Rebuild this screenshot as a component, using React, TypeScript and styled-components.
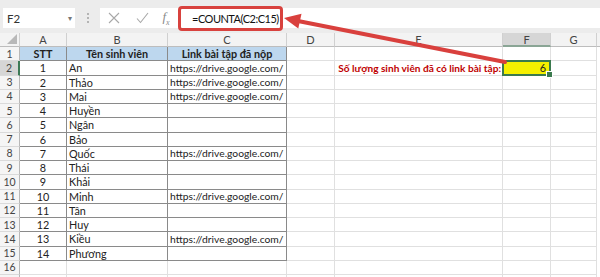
import React from "react";
import styled, { createGlobalStyle } from "styled-components";

const GlobalStyle = createGlobalStyle`
  html, body {
    margin: 0;
    padding: 0;
    width: 600px;
    height: 277px;
    overflow: hidden;
    background: #ffffff;
    font-family: "Lato", "Liberation Sans", sans-serif;
  }
`;

type Student = { stt: string; name: string; link: boolean };

const students: Student[] = [
  { stt: "1", name: "An", link: true },
  { stt: "2", name: "Thảo", link: true },
  { stt: "3", name: "Mai", link: true },
  { stt: "4", name: "Huyền", link: false },
  { stt: "5", name: "Ngân", link: false },
  { stt: "6", name: "Bảo", link: false },
  { stt: "7", name: "Quốc", link: true },
  { stt: "8", name: "Thái", link: false },
  { stt: "9", name: "Khải", link: false },
  { stt: "10", name: "Minh", link: true },
  { stt: "11", name: "Tân", link: false },
  { stt: "12", name: "Huy", link: false },
  { stt: "13", name: "Kiều", link: true },
  { stt: "14", name: "Phương", link: false },
];

const columns = ["A", "B", "C", "D", "E", "F", "G"];
const LINK = "https://drive.google.com/";
const GRID = "#e0e0e0";
const TABLE = "#8a8a8a";

export default function App() {
  // 16 labelled rows fit; the 17th only peeks in at the bottom edge
  const totalRows = 17;
  return (
    <>
      <GlobalStyle />
      <Page>
        <FormulaBar>
          <NameBox>
            F2
            <Caret>▾</Caret>
          </NameBox>
          <Grip>
            <i />
            <i />
            <i />
          </Grip>
          <FormulaArea>
            <ToolIcon>
              <svg width="12" height="12" viewBox="0 0 12 12">
                <path d="M1 1 L11 11 M11 1 L1 11" stroke="#a8a8a8" strokeWidth="1.1" fill="none" />
              </svg>
            </ToolIcon>
            <ToolIcon>
              <svg width="13" height="12" viewBox="0 0 13 12">
                <path d="M1 6.5 L4.5 10.5 L12 1" stroke="#a8a8a8" strokeWidth="1.1" fill="none" />
              </svg>
            </ToolIcon>
            <FxLabel>
              f<sub>x</sub>
            </FxLabel>
            <FormulaHighlight>=COUNTA(C2:C15)</FormulaHighlight>
          </FormulaArea>
        </FormulaBar>

        <Sheet>
          <Corner>
            <svg width="10" height="10" viewBox="0 0 10 10">
              <polygon points="10,0 10,10 0,10" fill="#b8b8b8" />
            </svg>
          </Corner>
          {columns.map((c) => (
            <ColHeader key={c} $selected={c === "F"}>
              {c}
            </ColHeader>
          ))}
          <ColHeader />

          {Array.from({ length: totalRows }, (_, i) => {
            const row = i + 1;
            const inTable = row <= 15;
            const s = row >= 2 && row <= 15 ? students[row - 2] : null;
            const line = inTable ? TABLE : GRID;
            return (
              <React.Fragment key={row}>
                <RowHeader $selected={row === 2}>{row <= 16 ? row : ""}</RowHeader>
                {row === 1 ? (
                  <>
                    <Cell $line={TABLE} $fill="#bdd7ee" $bold $align="center">
                      STT
                    </Cell>
                    <Cell $line={TABLE} $fill="#bdd7ee" $bold $align="center">
                      Tên sinh viên
                    </Cell>
                    <Cell $line={TABLE} $fill="#bdd7ee" $bold $align="center">
                      Link bài tập đã nộp
                    </Cell>
                  </>
                ) : (
                  <>
                    <Cell $line={line} $align="center">
                      {s?.stt}
                    </Cell>
                    <Cell $line={line}>{s?.name}</Cell>
                    <LinkCell $line={line}>{s?.link ? LINK : ""}</LinkCell>
                  </>
                )}
                <Cell />
                {row === 2 ? (
                  <NoteCell>Số lượng sinh viên đã có link bài tập:</NoteCell>
                ) : (
                  <Cell />
                )}
                {row === 2 ? <ActiveCell>6</ActiveCell> : <Cell />}
                <Cell />
                <Cell $line="transparent" />
              </React.Fragment>
            );
          })}
        </Sheet>

        <ArrowOverlay width="600" height="277" viewBox="0 0 600 277">
          <line x1="505" y1="62" x2="298" y2="21" stroke="#d9403d" strokeWidth="4" strokeLinecap="round" />
          <polygon points="284,18 301.5,13.8 298.3,28.5" fill="#d9403d" />
        </ArrowOverlay>
      </Page>
    </>
  );
}

const Page = styled.div`
  position: relative;
  width: 600px;
  height: 277px;
  overflow: hidden;
  color: #222;
`;

const FormulaBar = styled.div`
  display: flex;
  align-items: center;
  height: 33px;
  box-sizing: border-box;
  padding: 8px 0 5px 3px;
  background: #ececec;
`;

const NameBox = styled.div`
  display: flex;
  align-items: center;
  justify-content: space-between;
  box-sizing: border-box;
  width: 72px;
  height: 20px;
  padding: 0 3px 0 4px;
  background: #fff;
  font-size: 11.5px;
  color: #333;
`;

const Caret = styled.span`
  font-size: 8px;
  color: #777;
`;

const Grip = styled.div`
  display: flex;
  flex-direction: column;
  gap: 2px;
  width: 25px;
  align-items: center;

  i {
    display: block;
    width: 2px;
    height: 2px;
    background: #b4b4b4;
  }
`;

const FormulaArea = styled.div`
  flex: 1;
  display: flex;
  align-items: center;
  height: 20px;
  background: #fff;
`;

const ToolIcon = styled.span`
  display: flex;
  width: 28px;
  justify-content: center;
`;

const FxLabel = styled.span`
  width: 20px;
  font-family: "Liberation Serif", serif;
  font-style: italic;
  font-size: 13px;
  color: #8a8a8a;
  text-align: center;

  sub {
    font-size: 8px;
  }
`;

const FormulaHighlight = styled.div`
  display: flex;
  align-items: center;
  box-sizing: border-box;
  height: 25px;
  width: 105px;
  margin-left: 2px;
  padding-left: 11px;
  border: 3px solid #d8423e;
  border-radius: 4px;
  font-size: 11px;
  letter-spacing: -0.5px;
  white-space: nowrap;
  color: #111;
`;

const Sheet = styled.div`
  display: grid;
  grid-template-columns: 20px 47px 101px 119px 48px 168px 48px 46px 1fr;
  grid-template-rows: 14px;
  grid-auto-rows: 14.25px;
  font-size: 10.8px;
`;

const Corner = styled.div`
  display: flex;
  align-items: flex-end;
  justify-content: flex-end;
  padding: 0 2px 2px 0;
  background: #f3f3f3;
  border-right: 1px solid #d0d0d0;
  border-bottom: 1px solid #bdbdbd;
`;

const ColHeader = styled.div<{ $selected?: boolean }>`
  display: flex;
  align-items: center;
  justify-content: center;
  box-sizing: border-box;
  background: ${(p) => (p.$selected ? "#d6d6d6" : "#f3f3f3")};
  border-right: 1px solid #d0d0d0;
  border-bottom: ${(p) => (p.$selected ? "2px solid #8aa595" : "1px solid #bdbdbd")};
  color: #444;
  font-size: 11px;
`;

const RowHeader = styled.div<{ $selected?: boolean }>`
  display: flex;
  align-items: center;
  justify-content: center;
  box-sizing: border-box;
  background: ${(p) => (p.$selected ? "#d6d6d6" : "#f5f5f5")};
  border-right: ${(p) => (p.$selected ? "2px solid #3d7a56" : "1px solid #b8b8b8")};
  border-bottom: 1px solid #dadada;
  color: #444;
  font-size: 10.5px;
`;

const Cell = styled.div<{
  $align?: "left" | "center" | "right";
  $bold?: boolean;
  $fill?: string;
  $line?: string;
}>`
  display: flex;
  align-items: center;
  justify-content: ${(p) =>
    p.$align === "center" ? "center" : p.$align === "right" ? "flex-end" : "flex-start"};
  box-sizing: border-box;
  padding: 0 2px;
  white-space: nowrap;
  overflow: hidden;
  background: ${(p) => p.$fill ?? "transparent"};
  border-right: 1px solid ${(p) => p.$line ?? GRID};
  border-bottom: 1px solid ${(p) => p.$line ?? GRID};
  font-weight: ${(p) => (p.$bold ? 700 : 400)};
  color: #222;
`;

const LinkCell = styled(Cell)`
  font-size: 10.3px;
`;

const NoteCell = styled(Cell)`
  justify-content: flex-end;
  padding: 0 1px 0 0;
  overflow: visible;
  font-weight: 700;
  font-size: 10.1px;
  color: #c00000;
`;

const ActiveCell = styled.div`
  position: relative;
  display: flex;
  align-items: center;
  justify-content: flex-end;
  box-sizing: border-box;
  margin: -1px 0 0 -1px;
  padding: 0 3px;
  background: #f5f000;
  border: 2px solid #3b7a4e;
  color: #222;

  &::after {
    content: "";
    position: absolute;
    right: -4px;
    bottom: -4px;
    width: 5px;
    height: 5px;
    background: #3b7a4e;
    border: 1px solid #fff;
  }
`;

const ArrowOverlay = styled.svg`
  position: absolute;
  left: 0;
  top: 0;
  pointer-events: none;
`;
